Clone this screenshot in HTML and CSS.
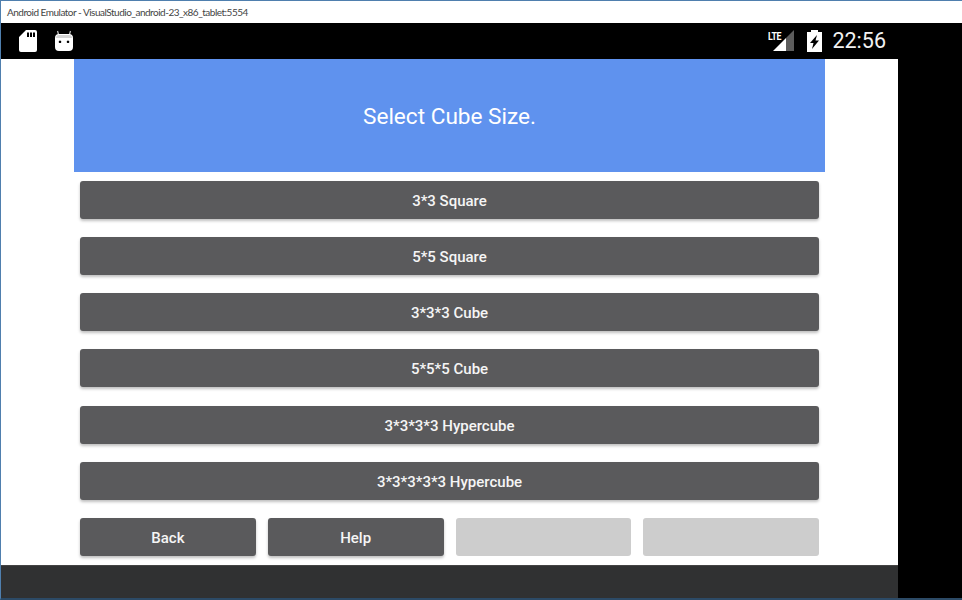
FILE: index.html
```html
<!DOCTYPE html>
<html lang="en">
<head>
<meta charset="utf-8">
<title>Android Emulator</title>
<link rel="stylesheet" href="styles.css">
</head>
<body>
<div class="window">
  <div class="titlebar">Android Emulator - VisualStudio_android-23_x86_tablet:5554</div>
  <div class="statusbar">
    <div class="status-left">
      <svg class="ico-sd" width="18" height="22" viewBox="0 0 18 22"><path fill="#fff" fill-rule="evenodd" d="M7 0H16a2 2 0 0 1 2 2V20a2 2 0 0 1-2 2H2a2 2 0 0 1-2-2V7ZM8 2.500V7H10V2.500ZM11 2.500V7H13V2.500ZM14 2.500V7H16V2.500Z"/></svg>
      <svg class="ico-bot" width="18" height="22" viewBox="0 0 18 22"><path stroke="#bbb" stroke-width="1.300" d="M4 6 2.500 1M14 6 15.500 1"/><path fill="#fff" fill-rule="evenodd" d="M4 4H14a4 4 0 0 1 4 4V17a4 4 0 0 1-4 4H4a4 4 0 0 1-4-4V8a4 4 0 0 1 4-4ZM5 10.500a1.300 1.300 0 1 0 .01 0ZM13 10.500a1.300 1.300 0 1 0 .01 0Z"/><path fill="#d4d4d4" d="M1 8a3 3 0 0 1 3-3H14a3 3 0 0 1 3 3Z"/></svg>
    </div>
    <div class="status-right">
      <div class="signal">
        <span class="lte">LTE</span>
        <svg width="22" height="22" viewBox="0 0 22 22"><path fill="#5c5c5c" d="M21 0V21H13V8Z"/><path fill="#fff" d="M13 8V21H0Z"/></svg>
      </div>
      <svg class="ico-bat" width="15" height="22" viewBox="0 0 15 22"><path fill="#fff" fill-rule="evenodd" d="M4 0H11V2H15V22H0V2H4ZM10 5 3 13H6.500L5 19 12 10.500H8.500Z"/></svg>
      <span class="clock">22:56</span>
    </div>
  </div>
  <div class="device">
    <div class="screen">
      <div class="app">
        <div class="app-inner">
          <div class="header">Select Cube Size.</div>
          <div class="list">
            <button class="btn">3*3 Square</button>
            <button class="btn">5*5 Square</button>
            <button class="btn">3*3*3 Cube</button>
            <button class="btn">5*5*5 Cube</button>
            <button class="btn">3*3*3*3 Hypercube</button>
            <button class="btn">3*3*3*3*3 Hypercube</button>
            <div class="actions">
              <button class="btn">Back</button>
              <button class="btn">Help</button>
              <button class="btn btn-off" disabled></button>
              <button class="btn btn-off" disabled></button>
            </div>
          </div>
        </div>
      </div>
      <div class="navbar"></div>
    </div>
    <div class="bezel"></div>
  </div>
</div>
</body>
</html>
```
FILE: styles.css
```css
* { box-sizing: border-box; }
html, body { margin: 0; padding: 0; }
body { width: 962px; height: 600px; overflow: hidden; background: #000; }
.window {
  width: 962px; height: 600px;
  display: flex; flex-direction: column;
  border: 1px solid #4f7fae;
  border-right-width: 0;
  border-bottom: 2px solid #2c4a66;
  background: #fff;
}
.titlebar {
  height: 22px; flex: none;
  padding-left: 6px;
  font: 10px/22px "Lato", "Liberation Sans", sans-serif;
  letter-spacing: -0.5px;
  color: #444;
  background: #fff;
}
.statusbar {
  height: 36px; flex: none;
  background: #000;
  display: flex; justify-content: space-between; align-items: center;
  padding: 0 76px 0 18px;
}
.status-left { display: flex; align-items: center; gap: 18px; }
.status-right { display: flex; align-items: center; }
.signal { position: relative; width: 27px; height: 22px; display: flex; justify-content: flex-end; }
.lte {
  position: absolute; left: 0; top: 1px;
  font: 700 11px/12px "Roboto", sans-serif;
  letter-spacing: -0.5px;
  transform: scaleX(.8); transform-origin: left;
  color: #fff;
}
.ico-bat { margin-left: 12px; }
.clock {
  margin-left: 10px;
  font: 400 21.500px/24px "Roboto", sans-serif;
  color: #f2f2f2;
}
.device { flex: 1; display: flex; min-height: 0; }
.screen { width: 897px; display: flex; flex-direction: column; }
.bezel { flex: 1; background: #000; }
.app { flex: 1; background: #fff; padding-left: 73px; }
.app-inner { width: 751px; display: flex; flex-direction: column; }
.header {
  height: 113px;
  padding-top: 2px;
  background: #5f92ee;
  color: #fff;
  display: flex; align-items: center; justify-content: center;
  font: 400 22.600px/26px "Roboto", sans-serif;
}
.list {
  padding: 9px 6px 0;
  display: flex; flex-direction: column; gap: 18.150px;
}
.btn {
  height: 38px;
  border: 0; padding: 2px 0 0;
  border-radius: 3px;
  background: #5a5a5c;
  color: #f5f5f5;
  font: 500 15px/18px "Roboto", sans-serif;
  box-shadow: 0 2px 3px rgba(0, 0, 0, .25);
}
.actions { display: grid; grid-template-columns: repeat(4, 1fr); gap: 12px; }
.btn-off { background: #cdcdcd; box-shadow: none; }
.navbar { height: 33px; flex: none; background: #303132; border-top: 1px solid #444; }
```
